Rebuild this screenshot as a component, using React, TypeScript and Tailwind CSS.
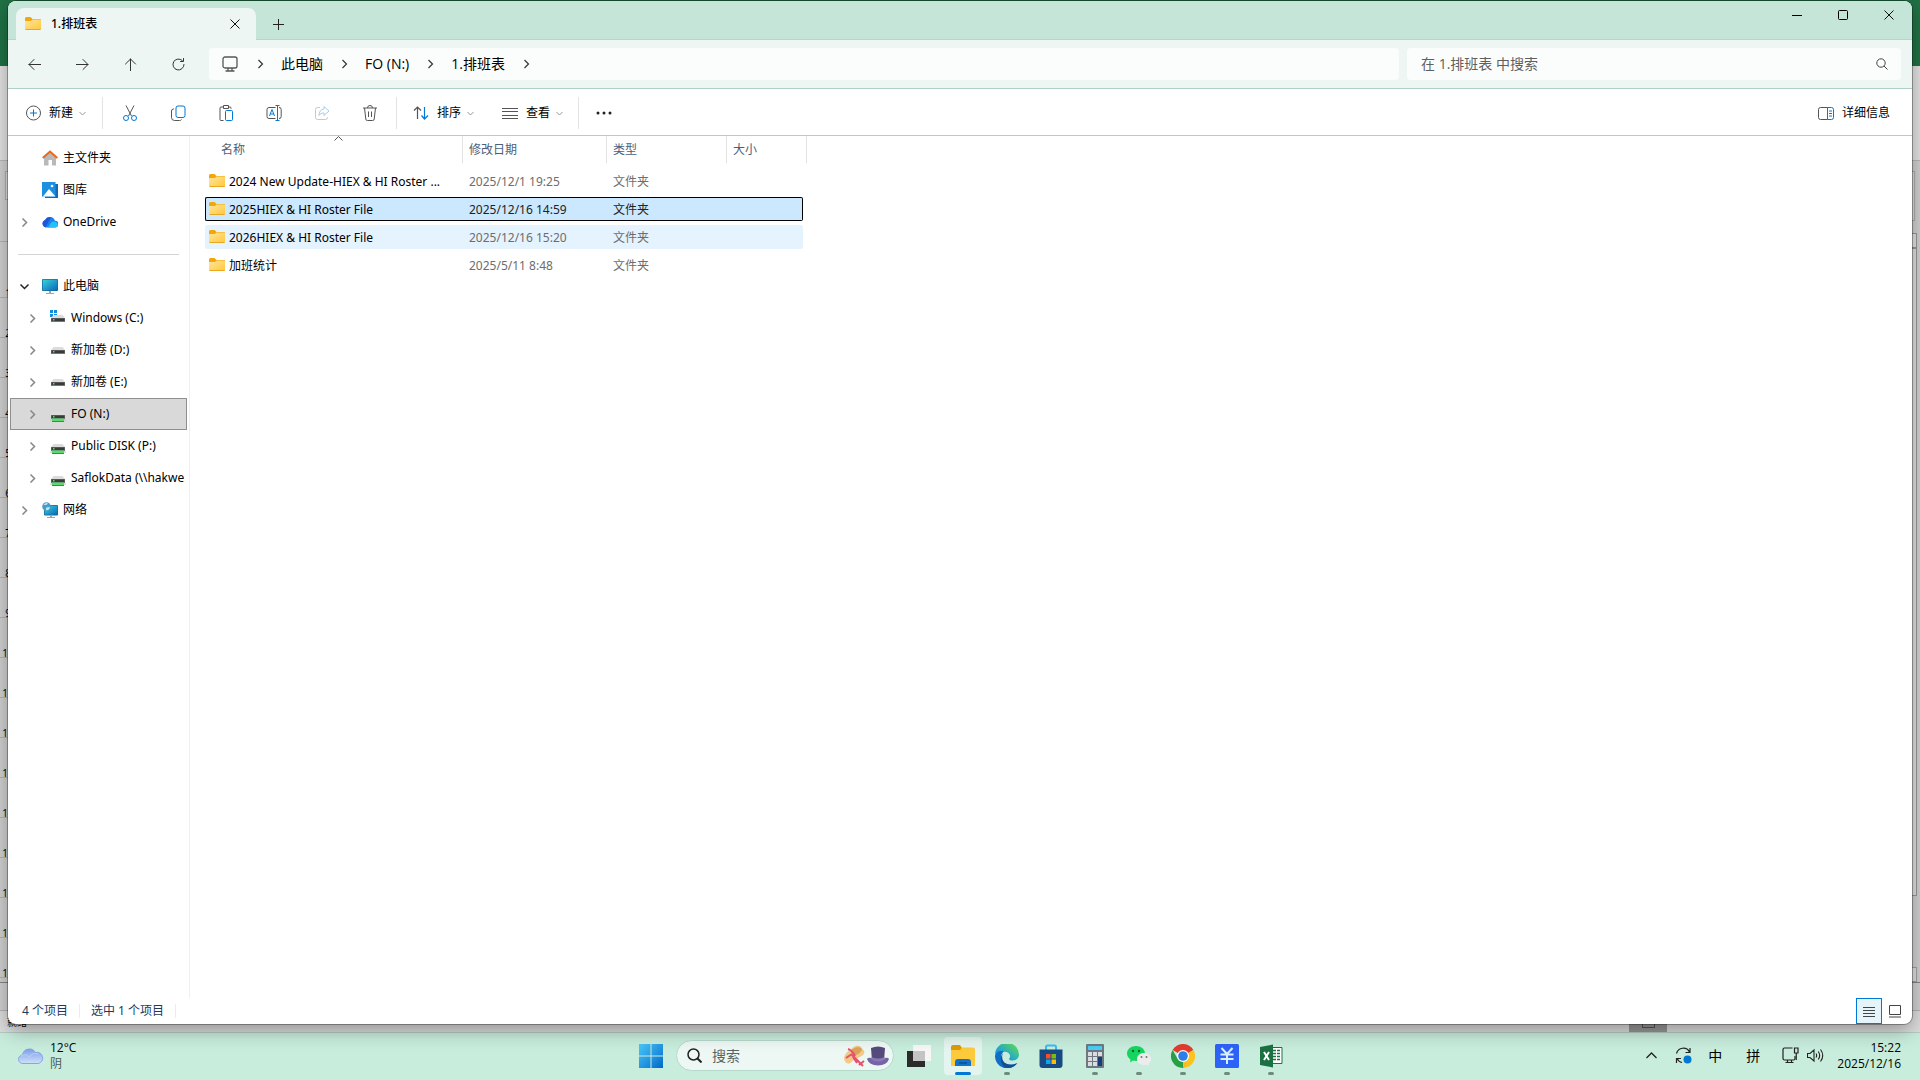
import type { ReactNode } from 'react'

const sans = "font-['Noto_Sans','Noto_Sans_CJK_SC',sans-serif]"
const ui = "font-['Open_Sans','Noto_Sans_CJK_SC',sans-serif]"

const App = () => {
  return (
    <div className={`flex h-screen min-h-[480px] flex-col overflow-hidden text-xs text-black ${sans}`}>
      <div className="relative min-h-0 flex-1">
        <SpreadsheetBackdrop />
        <main className="absolute top-px right-2 bottom-2 left-2 flex flex-col overflow-hidden rounded-lg bg-white shadow-[0_0_0_1px_rgba(0,0,0,0.3),0_6px_20px_rgba(0,0,0,0.35)]">
          <TitleBar />
          <NavBar />
          <Toolbar />
          <div className="flex min-h-0 flex-1">
            <Sidebar />
            <FileList />
          </div>
          <StatusBar />
        </main>
      </div>
      <Taskbar />
    </div>
  )
}

export default App

const sheetRows = [2, 3, 4, 5, 6, 7, 8, 9, 10, 11, 12, 13, 14, 15, 16, 17, 18]

const SpreadsheetBackdrop = () => {
  return (
    <div className="flex h-full flex-col overflow-hidden bg-[#d2d2d2] text-[10px] leading-[8px]" aria-hidden="true">
      <div className="h-[66px] shrink-0 bg-[#207245]" />
      <div className="h-[95px] shrink-0 border-b border-[#b8b8b8] bg-[#e4e4e4]" />
      <div className="flex h-[72px] shrink-0 items-start justify-between pt-[10px] pr-[5px] pl-[5px]">
        <div className="h-[29px] w-40 border border-[#b0b0b0] bg-[#dedede]" />
        <div className="h-[50px] w-40 border border-[#b0b0b0] bg-[#dedede]" />
      </div>
      <div className="flex min-h-0 flex-1 justify-between border-b border-[#858585]">
        <div className="w-4">
          <div className="h-[9px] border-b border-[#b4b4b4]" />
          <div className="flex h-14 items-end justify-center border-b border-[#b4b4b4]">1</div>
          {sheetRows.map((n) => (
            <div key={n} className="flex h-10 items-end justify-center border-b border-[#b4b4b4]">
              {n}
            </div>
          ))}
        </div>
        <div className="mr-[3px] flex w-4 flex-col">
          <div className="h-[15px] border border-[#999999] bg-[#e4e4e4]" />
          <div className="h-[648px] border border-[#999999] bg-[#e0e0e0]" />
          <div className="mt-auto h-[15px] border border-[#a5a5a5] bg-[#e0e0e0]" />
        </div>
      </div>
      <div className="h-7 shrink-0 border-b border-[#b4b4b4]" />
      <div className="flex h-[21px] shrink-0 items-end bg-[#dddddd]">
        <span className="pb-[6px] pl-[7px]">就绪</span>
        <div className="mr-[253px] ml-auto flex h-5 w-[38px] items-end justify-center bg-[#979797] pb-1">
          <div className="h-3 w-[13px] border border-[#555]" />
        </div>
      </div>
    </div>
  )
}

const TitleBar = () => {
  return (
    <div className="flex h-[39px] shrink-0 border-b border-[#b5d6c9] bg-[#c5e5d8]">
      <div className="mt-[7px] -mb-px ml-2 flex h-8 w-[240px] items-center rounded-t-lg bg-[#edf6f3] pr-[15px] pl-[9px]">
        <FolderIcon />
        <span className="ml-[10px] font-medium">1.排班表</span>
        <button type="button" aria-label="关闭标签页" className="ml-auto p-px">
          <CrossIcon size={10} />
        </button>
      </div>
      <button type="button" aria-label="新建标签页" className="mt-[7px] ml-1 flex h-8 w-9 items-center justify-center">
        <svg width="11" height="11" viewBox="0 0 11 11" stroke="#222" fill="none">
          <path d="M5.500 0v11M0 5.500h11" />
        </svg>
      </button>
      <div className="ml-auto flex h-7">
        <button type="button" aria-label="最小化" className="flex w-[46px] items-center justify-center">
          <svg width="10" height="10" viewBox="0 0 10 10" stroke="#000" fill="none">
            <path d="M0 5.500h10" />
          </svg>
        </button>
        <button type="button" aria-label="最大化" className="flex w-[46px] items-center justify-center">
          <svg width="10" height="10" viewBox="0 0 10 10" stroke="#000" fill="none">
            <rect x=".5" y=".5" width="9" height="9" rx="1" />
          </svg>
        </button>
        <button type="button" aria-label="关闭" className="flex w-[46px] items-center justify-center">
          <CrossIcon size={10} />
        </button>
      </div>
    </div>
  )
}

const NavBar = () => {
  return (
    <div className="flex h-[49px] shrink-0 items-center border-b border-[#b2cfc5] bg-[#edf6f3] pr-[11px] pl-[2px] text-sm">
      <NavButton label="后退">
        <path d="M13 6.500H1M6 1.500l-5 5 5 5" />
      </NavButton>
      <NavButton label="前进">
        <path d="M0 6.500h12M7 1.500l5 5-5 5" />
      </NavButton>
      <NavButton label="上移">
        <path d="M6.500 13V1M1.500 6l5-5 5 5" />
      </NavButton>
      <NavButton label="刷新">
        <path d="M12 6.500A5.500 5.500 0 1 1 10.200 2.400M11.500.500v3h-3" />
      </NavButton>
      <nav aria-label="地址" className={`ml-[7px] flex h-8 min-w-0 flex-1 items-center rounded bg-[#fbfdfc] pl-[13px] ${ui}`}>
        <svg className="mr-px" width="16" height="16" viewBox="0 0 16 16" fill="none" stroke="#555" strokeWidth="1.3">
          <rect x="1" y="1" width="14" height="11" rx="2" />
          <path d="M6 12v2.500M10 12v2.500M3.500 15h9" />
        </svg>
        <Crumb />
        <a href="#pc">此电脑</a>
        <Crumb />
        <a href="#n">FO (N:)</a>
        <Crumb />
        <a href="#roster">1.排班表</a>
        <Crumb />
      </nav>
      <label className={`ml-2 flex h-8 w-[494px] items-center rounded bg-[#fbfdfc] pr-[13px] pl-[14px] ${ui}`}>
        <input
          type="search"
          aria-label="搜索"
          placeholder="在 1.排班表 中搜索"
          className="min-w-0 flex-1 outline-none placeholder:text-[#5f5f5f]"
        />
        <svg width="12" height="12" viewBox="0 0 12 12" fill="none" stroke="#444">
          <circle cx="5" cy="5" r="4.200" />
          <path d="M8 8l3.500 3.500" />
        </svg>
      </label>
    </div>
  )
}

const NavButton = ({ label, children }: { label: string; children: ReactNode }) => {
  return (
    <button type="button" aria-label={label} className="flex h-8 w-12 shrink-0 items-center justify-center">
      <svg width="13" height="13" viewBox="0 0 13 13" fill="none" stroke="#333" strokeLinecap="round" strokeLinejoin="round">
        {children}
      </svg>
    </button>
  )
}

const Crumb = () => (
  <svg width="42" height="10" viewBox="0 0 42 10" fill="none" stroke="#333" strokeWidth="1.200">
    <path d="M19.500 1l4 4-4 4" />
  </svg>
)

const Toolbar = () => {
  return (
    <div className="flex h-[47px] shrink-0 items-center border-b border-[#b2cfc5] pt-[2px] pr-[22px] pl-[18px]">
      <button type="button" className="flex items-center">
        <svg width="15" height="16" viewBox="0 0 15 16" fill="none" stroke="#555">
          <circle cx="7.500" cy="8" r="7" />
          <path d="M7.500 4.500v7M4 8h7" stroke="#0078d4" />
        </svg>
        <span className="ml-2">新建</span>
        <DownChevron />
      </button>
      <Separator className="mr-[3px] ml-4" />
      <ToolButton label="剪切">
        <path d="M4 .500l5.500 10.500M12 .500L6.500 11" stroke="#555" />
        <circle cx="4" cy="13" r="2.500" stroke="#0078d4" />
        <circle cx="12" cy="13" r="2.500" stroke="#0078d4" />
      </ToolButton>
      <ToolButton label="复制">
        <rect x="6" y="1" width="9" height="11.500" rx="2" stroke="#0078d4" />
        <path d="M4 4h-.500a2 2 0 0 0-2 2v6.500a3 3 0 0 0 3 3h5a2 2 0 0 0 2-1" stroke="#555" />
      </ToolButton>
      <ToolButton label="粘贴">
        <path d="M5.500 2H3a1 1 0 0 0-1 1v11.500a1 1 0 0 0 1 1h2.500M10.500 2H12a1 1 0 0 1 1 1v.800M5.500.500h5v3h-5z" stroke="#555" />
        <rect x="7.500" y="5.500" width="7" height="10" rx="1" stroke="#0078d4" />
      </ToolButton>
      <ToolButton label="重命名">
        <path d="M9.500 2.500H3a2 2 0 0 0-2 2v7a2 2 0 0 0 2 2h6.500M13 2.500a2 2 0 0 1 2.200 2v7a2 2 0 0 1-2.200 2" stroke="#555" />
        <path d="M11.500.500v15M9.500.500h4M9.500 15.500h4M3.500 11l2.500-6.500L8.500 11M4.300 9h3.400" stroke="#0078d4" />
      </ToolButton>
      <ToolButton label="共享">
        <path d="M6 2.500H3.500a2 2 0 0 0-2 2v8a2 2 0 0 0 2 2h8a2 2 0 0 0 2-2V12" stroke="#c8c8c8" />
        <path d="M10 1.500l5 4.500-5 4.500V8c-2.500 0-4 .800-5 2.500C5 7 6.500 4.300 10 4z" stroke="#a6cdee" />
      </ToolButton>
      <ToolButton label="删除">
        <path d="M1 3h14M5.500 3a2.500 2.500 0 0 1 5 0M2.500 3l1.300 11a1.500 1.500 0 0 0 1.500 1.500h5.400a1.500 1.500 0 0 0 1.500-1.500L13.500 3M6.500 6.500v5.500M9.500 6.500v5.500" stroke="#555" />
      </ToolButton>
      <Separator className="mr-4 ml-[2px]" />
      <button type="button" className="flex items-center">
        <svg width="16" height="14" viewBox="0 0 16 14" fill="none" strokeWidth="1.200">
          <path d="M4.500 13V1M1 4.500L4.500 1 8 4.500" stroke="#555" />
          <path d="M11.500 1v12M8.500 9.500l3 3.500 3.500-3.500" stroke="#0078d4" />
        </svg>
        <span className="ml-2">排序</span>
        <DownChevron />
      </button>
      <button type="button" className="ml-7 flex items-center">
        <svg width="16" height="13" viewBox="0 0 16 13" stroke="#555">
          <path d="M0 1.500h16M0 4.500h16M0 8.500h16M0 11.500h16" />
        </svg>
        <span className="ml-2">查看</span>
        <DownChevron />
      </button>
      <Separator className="mr-4 ml-[15px]" />
      <button type="button" aria-label="查看更多" className="p-px">
        <svg width="16" height="4" viewBox="0 0 16 4" fill="#222">
          <circle cx="2" cy="2" r="1.500" />
          <circle cx="8" cy="2" r="1.500" />
          <circle cx="14" cy="2" r="1.500" />
        </svg>
      </button>
      <button type="button" className="ml-auto flex items-center">
        <svg width="16" height="13" viewBox="0 0 16 13" fill="none">
          <path d="M9.500.500h-7a2 2 0 0 0-2 2v8a2 2 0 0 0 2 2h7" stroke="#555" />
          <path d="M9.500.500h4a2 2 0 0 1 2 2v8a2 2 0 0 1-2 2h-4zM11 4h3M11 6.500h3M11 9h3" stroke="#0078d4" />
        </svg>
        <span className="ml-2">详细信息</span>
      </button>
    </div>
  )
}

const ToolButton = ({ label, children }: { label: string; children: ReactNode }) => {
  return (
    <button type="button" aria-label={label} className="flex h-8 w-12 items-center justify-center">
      <svg width="16" height="16" viewBox="0 0 16 16" fill="none">
        {children}
      </svg>
    </button>
  )
}

const Separator = ({ className }: { className: string }) => <div className={`h-8 w-px bg-[#e3e3e3] ${className}`} />

const DownChevron = () => (
  <svg className="ml-[6px]" width="7" height="5" viewBox="0 0 7 5" fill="none" stroke="#999">
    <path d="M.500 1l3 3 3-3" />
  </svg>
)

const CrossIcon = ({ size }: { size: number }) => (
  <svg width={size} height={size} viewBox="0 0 10 10" fill="none" stroke="#111">
    <path d="M.500.500l9 9M9.500.500l-9 9" />
  </svg>
)

const FolderIcon = () => (
  <svg className="shrink-0" width="16" height="16" viewBox="0 0 16 16">
    <defs>
      <linearGradient id="folder" x1="0" y1="0" x2="1" y2="1">
        <stop offset="0" stopColor="#ffe59a" />
        <stop offset="1" stopColor="#ffc83d" />
      </linearGradient>
    </defs>
    <path d="M0 2.500Q0 1 1.500 1H5.500L7.500 3H15Q16 3 16 4V8H0z" fill="#f2a60d" />
    <path d="M0 5H6L7.500 3.500H15Q16 3.500 16 4.500V13Q16 14 15 14H1Q0 14 0 13z" fill="url(#folder)" />
    <path d="M.500 13.500h15" stroke="#e9a820" />
  </svg>
)

type Place = {
  name: string
  icon: ReactNode
  level?: number
  arrow?: 'right' | 'down'
  selected?: boolean
}

const Sidebar = () => {
  const top: Place[] = [
    { name: '主文件夹', icon: <HomeIcon /> },
    { name: '图库', icon: <GalleryIcon /> },
    { name: 'OneDrive', icon: <OneDriveIcon />, arrow: 'right' },
  ]
  const bottom: Place[] = [
    { name: '此电脑', icon: <ComputerIcon />, arrow: 'down' },
    { name: 'Windows (C:)', icon: <DriveIcon windows />, level: 1, arrow: 'right' },
    { name: '新加卷 (D:)', icon: <DriveIcon />, level: 1, arrow: 'right' },
    { name: '新加卷 (E:)', icon: <DriveIcon />, level: 1, arrow: 'right' },
    { name: 'FO (N:)', icon: <DriveIcon network />, level: 1, arrow: 'right', selected: true },
    { name: 'Public DISK (P:)', icon: <DriveIcon network />, level: 1, arrow: 'right' },
    { name: 'SaflokData (\\\\hakwe', icon: <DriveIcon network />, level: 1, arrow: 'right' },
    { name: '网络', icon: <NetworkIcon />, arrow: 'right' },
  ]
  return (
    <aside className="w-[182px] shrink-0 overflow-hidden border-r border-[#f0f0f0] pt-[6px] pr-[2px] pl-[2px]">
      <ul>
        {top.map((place) => (
          <PlaceItem key={place.name} {...place} />
        ))}
      </ul>
      <hr className="mt-4 mr-2 mb-[15px] ml-2 border-[#d4d4d4]" />
      <ul>
        {bottom.map((place) => (
          <PlaceItem key={place.name} {...place} />
        ))}
      </ul>
    </aside>
  )
}

const PlaceItem = ({ name, icon, level = 0, arrow, selected }: Place) => {
  return (
    <li className={`h-8 w-[177px] border ${selected ? 'border-[#8f8f8f] bg-[#d9d9d9]' : 'border-transparent'}`}>
      <button type="button" className={`flex h-full w-full items-center overflow-hidden ${level ? 'pl-[17px]' : 'pl-[9px]'}`}>
        <svg className="shrink-0" width="9" height="9" viewBox="0 0 9 9" fill="none" strokeWidth="1.500">
          {arrow === 'right' && <path d="M2.500.500l4 4-4 4" stroke="#868686" />}
          {arrow === 'down' && <path d="M.500 2.500l4 4 4-4" stroke="#222" />}
        </svg>
        <span className="ml-[13px] shrink-0">{icon}</span>
        <span className="ml-[5px] whitespace-nowrap">{name}</span>
      </button>
    </li>
  )
}

const HomeIcon = () => (
  <svg width="16" height="16" viewBox="0 0 16 16">
    <path d="M2 7l6-5.500L14 7v8.500h-4V10H6.500v5.500H2z" fill="#b9b9b9" />
    <path d="M.700 8L8 1.500 15.300 8" fill="none" stroke="#e8681c" strokeWidth="2" />
  </svg>
)

const GalleryIcon = () => (
  <svg width="16" height="16" viewBox="0 0 16 16">
    <path d="M3 2h13v14H3z" fill="#0f6cbd" />
    <path d="M0 0h13.500v14.500H0z" fill="#1b8fe0" />
    <path d="M1 14.500L7 7l6.500 7.500z" fill="#fff" />
    <circle cx="10" cy="4" r="1.300" fill="#fff" />
  </svg>
)

const OneDriveIcon = () => (
  <svg width="16" height="16" viewBox="0 0 16 16">
    <path d="M4 13.500a4 4 0 0 1-1-7.600 5.500 5.500 0 0 1 10 .800 3.400 3.400 0 0 1 0 6.800z" fill="#1683ee" />
    <path d="M3.500 13.500a4 4 0 0 1-.500-7.600 5.500 5.500 0 0 1 6-2.700z" fill="#2355d9" />
    <path d="M6 13.500l3.500-5.500a4.500 4.500 0 0 1 6.500 2.500 3 3 0 0 1-3 3z" fill="#27bff8" />
  </svg>
)

const ComputerIcon = () => (
  <svg width="16" height="16" viewBox="0 0 16 16">
    <defs>
      <linearGradient id="screen" x1="0" y1="0" x2="1" y2="1">
        <stop offset="0" stopColor="#36d3dc" />
        <stop offset="1" stopColor="#0c68b8" />
      </linearGradient>
    </defs>
    <rect y="1" width="16" height="12" rx="1" fill="#146a9f" />
    <rect x=".7" y="1.700" width="14.600" height="10.600" fill="url(#screen)" />
    <path d="M7 13h2v2h-2zM4 15h8v1H4z" fill="#9aa5ad" />
  </svg>
)

const NetworkIcon = () => (
  <svg width="16" height="16" viewBox="0 0 16 16">
    <rect x="2" y="3" width="14" height="10.500" rx="1" fill="#146a9f" />
    <rect x="2.700" y="3.700" width="12.600" height="9" fill="url(#screen)" />
    <path d="M8 13.500h2V15H8zM5 15h8v1H5z" fill="#9aa5ad" />
    <circle cx="4.500" cy="4.500" r="4.300" fill="#4c9cc9" />
    <path d="M1.500 2.500Q4 0 6 1.500 4 4 1.500 2.500M4 6q3-2 4 0-2 3-4 2z" fill="#c6e3f0" />
  </svg>
)

const DriveIcon = ({ windows, network }: { windows?: boolean; network?: boolean }) => (
  <svg width="16" height="16" viewBox="0 0 16 16">
    {windows && <path d="M0 0h3v3H0zM4 0h3v3H4zM0 4h3v3H0zM4 4h3v3H4z" fill="#0f8ce0" />}
    <g transform={network ? 'translate(0 1)' : undefined}>
      <path d="M3.500 5h9l2.500 3H1z" fill="#dcdcdc" />
      <path d="M1 8h14v4H1z" fill="#777" />
      <path d="M1.500 8.500h13v2.500h-13z" fill="#3a3a3a" />
      <path d="M3 9h1.500v1.500H3z" fill="#4be36a" />
    </g>
    {network && (
      <g>
        <path d="M0 14h16" stroke="#b8c4ba" />
        <path d="M2 12.500h12V16H2z" fill="#54dd6c" />
        <path d="M2 15.500h12" stroke="#1d9c46" />
      </g>
    )}
  </svg>
)

type FileRow = { name: string; date: string; state?: 'selected' | 'hover' }

const files: FileRow[] = [
  { name: '2024 New Update-HIEX & HI Roster ...', date: '2025/12/1 19:25' },
  { name: '2025HIEX & HI Roster File', date: '2025/12/16 14:59', state: 'selected' },
  { name: '2026HIEX & HI Roster File', date: '2025/12/16 15:20', state: 'hover' },
  { name: '加班统计', date: '2025/5/11 8:48' },
]

const rowStyles = {
  selected:
    'text-[#222] [&>td]:border-y [&>td]:border-black [&>td]:bg-[#cce8ff] [&>td:first-child]:rounded-l-xs [&>td:first-child]:border-l [&>td:last-child]:rounded-r-xs [&>td:last-child]:border-r',
  hover: 'text-[#6d6d6d] [&>td]:bg-[#e5f3ff] [&>td:first-child]:rounded-l-xs [&>td:last-child]:rounded-r-xs',
  plain: 'text-[#6d6d6d]',
}

const FileList = () => {
  return (
    <div className="relative min-w-0 flex-1 pl-[15px]">
      <svg className="absolute top-0 left-[144px]" width="9" height="5" viewBox="0 0 9 5" fill="none" stroke="#555">
        <path d="M.500 4.500l4-4 4 4" />
      </svg>
      <table className="-mt-1 w-[598px] table-fixed border-separate border-spacing-x-0 border-spacing-y-1">
        <thead>
          <tr className="h-[29px] text-left align-top text-[#4c607a]">
            <th className="w-[258px] p-0 font-normal">
              <div className="flex h-[27px] items-center border-r border-[#e2e2e2] pl-4">名称</div>
            </th>
            <th className="w-[144px] p-0 font-normal">
              <div className="flex h-[27px] items-center border-r border-[#e2e2e2] pl-[6px]">修改日期</div>
            </th>
            <th className="w-[120px] p-0 font-normal">
              <div className="flex h-[27px] items-center border-r border-[#e2e2e2] pl-[6px]">类型</div>
            </th>
            <th className="w-[76px] p-0 font-normal">
              <div className="flex h-[27px] w-20 items-center border-r border-[#e2e2e2] pl-[6px]">大小</div>
            </th>
          </tr>
        </thead>
        <tbody>
          {files.map((file) => (
            <tr key={file.name} className={`h-6 ${rowStyles[file.state ?? 'plain']}`}>
              <td className="p-0">
                <div className={`flex items-start pr-2 ${file.state === 'selected' ? 'pl-[3px]' : 'pl-1'}`}>
                  <FolderIcon />
                  <span className="ml-1 truncate pt-px text-black">{file.name}</span>
                </div>
              </td>
              <td className="p-0 pt-px pl-[6px]">{file.date}</td>
              <td className="p-0 pt-px pl-[6px]">文件夹</td>
              <td className="p-0" />
            </tr>
          ))}
        </tbody>
      </table>
    </div>
  )
}

const StatusBar = () => {
  return (
    <div className="flex h-[26px] shrink-0 items-center pr-[4px] pl-[14px] text-[#1e395b]">
      <span>4 个项目</span>
      <div className="mx-[11px] h-[14px] w-px bg-[#ececec]" />
      <span>选中 1 个项目</span>
      <div className="mx-[11px] h-[14px] w-px bg-[#ececec]" />
      <button
        type="button"
        aria-label="详细信息视图"
        className="ml-auto flex size-[26px] items-center justify-center border border-[#0078d7] bg-[#e5f3fb]"
      >
        <svg width="12" height="11" viewBox="0 0 12 11" stroke="#444">
          <path d="M0 1.500h12M0 4.500h12M0 7.500h12M0 10.500h12" />
        </svg>
      </button>
      <button type="button" aria-label="大缩略图视图" className="flex size-[26px] items-center justify-center">
        <svg width="12" height="13" viewBox="0 0 12 13" fill="none" stroke="#444">
          <path d="M.500.500h11v9H.500zM0 12h12" />
        </svg>
      </button>
    </div>
  )
}

const Taskbar = () => {
  return (
    <footer className={`grid h-12 shrink-0 grid-cols-[1fr_auto_1fr] items-center border-t border-[#b3cdc2] bg-[#c8eddd] pb-[2px] ${ui}`}>
      <button type="button" className="flex items-center justify-self-start pl-[18px] text-left">
        <svg width="26" height="18" viewBox="0 0 26 18">
          <defs>
            <linearGradient id="cloud" x1="0" y1="0" x2="0" y2="1">
              <stop offset="0" stopColor="#7f9fe6" />
              <stop offset="1" stopColor="#cfe0fb" />
            </linearGradient>
          </defs>
          <path d="M5 16.500a4.200 4.200 0 0 1-.500-8.500A7 7 0 0 1 17.500 5.500a5.500 5.500 0 0 1 3 11z" fill="url(#cloud)" stroke="#86a4e8" />
          <path d="M3 9q5-3 8 1 4-5 9-3" fill="none" stroke="#b9cdf6" />
        </svg>
        <span className="ml-[6px] flex flex-col leading-4">
          <span>12°C</span>
          <span className="text-[#4d5c56]">阴</span>
        </span>
      </button>

      <div className="flex items-center pl-[2px]">
        <TaskButton label="开始">
          <path d="M0 0h11.500v11.500H0zM12.500 0H24v11.500H12.500zM0 12.500h11.500V24H0zM12.500 12.500H24V24H12.500z" fill="url(#win)" />
          <defs>
            <linearGradient id="win" x1="0" y1="0" x2="1" y2="1">
              <stop offset="0" stopColor="#4cc8fb" />
              <stop offset="1" stopColor="#0069c8" />
            </linearGradient>
          </defs>
        </TaskButton>
        <label className="mx-[3px] flex h-[31px] w-[218px] items-center rounded-full border border-[#b7d9cb] bg-[#edf8f4] pr-1 pl-[10px]">
          <svg className="shrink-0" width="15" height="15" viewBox="0 0 15 15" fill="none" stroke="#222" strokeWidth="1.500">
            <circle cx="6.500" cy="6.500" r="5.500" />
            <path d="M10.500 10.500l4 4" strokeWidth="2" />
          </svg>
          <input
            type="search"
            aria-label="搜索"
            placeholder="搜索"
            className="ml-[10px] min-w-0 flex-1 text-sm outline-none placeholder:text-[#5a6460]"
          />
          <HatsIcon />
        </label>
        <TaskButton label="任务视图">
          <path d="M0 7h18v16H0z" fill="#2b2b2b" />
          <path d="M6 1h18v16H6z" fill="#f6f6f6" />
          <path d="M6 7h12v10H6z" fill="#c4c4c4" />
        </TaskButton>
        <TaskButton label="文件资源管理器" active>
          <path d="M0 3q0-2 2-2h7l2 3v4H0z" fill="#dd9a08" />
          <path d="M0 6h9l2-2.500h11q2 0 2 2V22H0z" fill="#fdca3c" />
          <path d="M4 22v-4q0-3 3-3h10q3 0 3 3v4z" fill="#1272c8" />
          <path d="M8 19h8" stroke="#0b4f98" strokeWidth="1.500" />
        </TaskButton>
        <TaskButton label="Microsoft Edge" running>
          <defs>
            <linearGradient id="edge" x1="0" y1="1" x2="1" y2="0">
              <stop offset=".3" stopColor="#1b9de0" />
              <stop offset=".9" stopColor="#5ddc5a" />
            </linearGradient>
          </defs>
          <path d="M0 11A12 12 0 0 1 24 10.500c0 4-3 6-6.500 6-2.500 0-3.800-1-3.300-2 1.800-2 .800-5.500-2.700-6.500C6 6.500 1 8 0 11z" fill="url(#edge)" />
          <path d="M0 12C.500 8 5 6 9 7.500c-3 2-4 6-1.500 9.500 3 4 9 4.500 14.500 2A12 12 0 0 1 0 12z" fill="#0f6fc6" />
          <path d="M8.500 8.500C6 12 7 17.500 11 19.500c3.500 2 8 1.500 11.500-.500A12 12 0 0 1 12 24C6 23 3.500 13 8.500 8.500z" fill="#134f92" />
        </TaskButton>
        <TaskButton label="Microsoft Store">
          <path d="M7 6V3q0-1.500 1.500-1.500h7Q17 1.500 17 3v3" fill="none" stroke="#38bdf2" strokeWidth="2" />
          <path d="M.500 5.500h23V21q0 3-3 3h-17q-3 0-3-3z" fill="#174a82" />
          <path d="M7 10h4.500v4.500H7z" fill="#f2502a" />
          <path d="M12.500 10H17v4.500h-4.500z" fill="#80bb0c" />
          <path d="M7 15.500h4.500V20H7z" fill="#0ba5ef" />
          <path d="M12.500 15.500H17V20h-4.500z" fill="#fdb90c" />
        </TaskButton>
        <TaskButton label="计算器" running>
          <rect x="3" width="18" height="24" rx="1" fill="#70787f" />
          <path d="M5 2h14v4H5z" fill="#48cdf5" />
          <path d="M5 8h4v4H5zM10 8h4v4h-4zM15 8h4v4h-4zM5 13h4v4H5zM10 13h4v4h-4zM5 18h4v4H5zM10 18h4v4h-4z" fill="#d9dde2" />
          <path d="M15 13h4v9h-4z" fill="#123f7c" />
        </TaskButton>
        <TaskButton label="微信" running>
          <path d="M9 2c5 0 9 3 9 7.500S14 17 9 17c-1 0-2-.200-3-.500L3 18.500l.500-3C1.500 14 0 12 0 9.500 0 5 4 2 9 2z" fill="#16d45f" />
          <circle cx="6" cy="7" r="1.200" fill="#0a6b30" />
          <circle cx="12" cy="7" r="1.200" fill="#0a6b30" />
          <path d="M17 9c4 0 7 2.700 7 6 0 2-1 3.500-2.500 4.500l.500 2.500-2.500-1.300c-5 1.300-9.500-1.500-9.500-5.700 0-3.300 3-6 7-6z" fill="#ececec" />
          <circle cx="14.500" cy="13" r="1" fill="#777" />
          <circle cx="19.500" cy="13" r="1" fill="#777" />
        </TaskButton>
        <TaskButton label="Google Chrome" running>
          <path d="M12 12L1.600 6A12 12 0 0 1 22.400 6z" fill="#e33b2e" />
          <path d="M12 12l10.400-6A12 12 0 0 1 12 24z" fill="#fcc31e" />
          <path d="M12 24A12 12 0 0 1 1.600 6l5.200 9L12 18l3 .500z" fill="#2b9f48" />
          <path d="M12 24l5.200-9L12 12v6z" fill="#fcc31e" />
          <circle cx="12" cy="12" r="6" fill="#fff" />
          <circle cx="12" cy="12" r="4.800" fill="#2f7de8" />
        </TaskButton>
        <TaskButton label="收款" running>
          <rect width="24" height="24" rx="1.500" fill="#2c62f6" />
          <path d="M6.500 4l5.500 6 5.500-6M12 10v10M5.500 10.500h13M5.500 15h13" fill="none" stroke="#d8efff" strokeWidth="2" />
        </TaskButton>
        <TaskButton label="Excel" running>
          <path d="M12 3.500h11v16H12z" fill="#fff" stroke="#1f7244" />
          <path d="M14 6.500h3M18 6.500h3M14 9.500h3M18 9.500h3M14 12.500h3M18 12.500h3M14 15.500h3M18 15.500h3" stroke="#1f7244" strokeWidth="1.500" />
          <path d="M1 3l13-2.500v23L1 21z" fill="#1b7142" />
          <path d="M5 8l5 8M10 8l-5 8" stroke="#fff" strokeWidth="2" />
        </TaskButton>
      </div>

      <div className="flex items-center justify-self-end pr-[19px] text-black">
        <button type="button" aria-label="显示隐藏的图标" className="flex h-8 w-8 items-center justify-center">
          <svg width="11" height="7" viewBox="0 0 11 7" fill="none" stroke="#222" strokeWidth="1.300">
            <path d="M.500 6l5-5 5 5" />
          </svg>
        </button>
        <button type="button" aria-label="同步" className="flex h-8 w-8 items-center justify-center">
          <svg width="17" height="17" viewBox="0 0 17 17" fill="none" stroke="#222" strokeWidth="1.200">
            <path d="M1.500 6.500a7 7 0 0 1 13-1.500M15 1v4.500h-4.500M7 15.500a7 7 0 0 1-5-4M1.500 16v-4.500H6" />
            <circle cx="12.500" cy="12.500" r="4" fill="#0078d4" stroke="none" />
          </svg>
        </button>
        <button type="button" className="flex h-8 w-8 items-center justify-center text-sm">
          中
        </button>
        <button type="button" className="ml-[6px] flex h-8 w-8 items-center justify-center text-sm">
          拼
        </button>
        <button type="button" aria-label="网络和音量" className="ml-[13px] flex h-8 items-center gap-2">
          <svg width="17" height="17" viewBox="0 0 17 17" fill="none" stroke="#222" strokeWidth="1.200">
            <path d="M10.500 1H2.500a1.500 1.500 0 0 0-1.500 1.500v9A1.500 1.500 0 0 0 2.500 13h9a1.500 1.500 0 0 0 1.500-1.500V9M3.500 15.500h8M5.500 13v2.500M9.500 13v2.500" />
            <path d="M12.500 1h3.500v5h-3.500zM14.250 6v7" />
          </svg>
          <svg width="17" height="15" viewBox="0 0 17 15" fill="none" stroke="#222" strokeWidth="1.100">
            <path d="M.500 5.500v4H3l4 3.500V2L3 5.500zM9 5.500q1.300 2 0 4M11.200 3.500q3 4 0 8M13.500 1.500q4.500 6 0 12" />
          </svg>
        </button>
        <button type="button" className="ml-[13px] flex flex-col items-end leading-4">
          <time>15:22</time>
          <time>2025/12/16</time>
        </button>
      </div>
    </footer>
  )
}

type TaskButtonProps = { label: string; active?: boolean; running?: boolean; children: ReactNode }

const TaskButton = ({ label, active, running, children }: TaskButtonProps) => {
  return (
    <button
      type="button"
      aria-label={label}
      className={`mx-[3px] flex h-[38px] w-[38px] flex-col items-center rounded pt-[7px] ${active ? 'bg-[#e3f5ee]' : ''}`}
    >
      <svg className="shrink-0" width="24" height="24" viewBox="0 0 24 24">
        {children}
      </svg>
      {active && <span className="mt-1 h-[3px] w-4 shrink-0 rounded-full bg-[#0078d4]" />}
      {running && <span className="mt-1 h-[3px] w-[6px] shrink-0 rounded-full bg-[#6f8b80]" />}
    </button>
  )
}

const HatsIcon = () => (
  <svg className="shrink-0" width="46" height="24" viewBox="0 0 46 24">
    <path d="M1 15C1 9 7 6 10 3.500c3-3 9-2 9.500 2 2 .500 2.500 3 1 5-3 3-9 4-12 7.500-2 2.500-6 2.500-7.500-3z" fill="#f3c987" />
    <path d="M8 8c1-4 8-6.500 11-3-1 4-5 6-9 7z" fill="#dba35a" />
    <path d="M5 5q4 1 7 7M3 14l6-4M9 11l10 10M10 13l4 6M15 17l5 5M21 17l-5 4" fill="none" stroke="#e4526e" strokeWidth="2" />
    <path d="M28 4q7-3 14 0l-1 13q-6 3-12 0z" fill="#554a7c" />
    <path d="M28.500 13q6 3 13 0v4q-6 3-12.500 0z" fill="#8a78b8" />
    <path d="M24 15q1-2 4.500-1 0 3 6.500 3.500 6 0 7-3.500 3-1 4 1-2 6-11 6.500-9-.500-11-6.500z" fill="#7565a6" />
  </svg>
)
